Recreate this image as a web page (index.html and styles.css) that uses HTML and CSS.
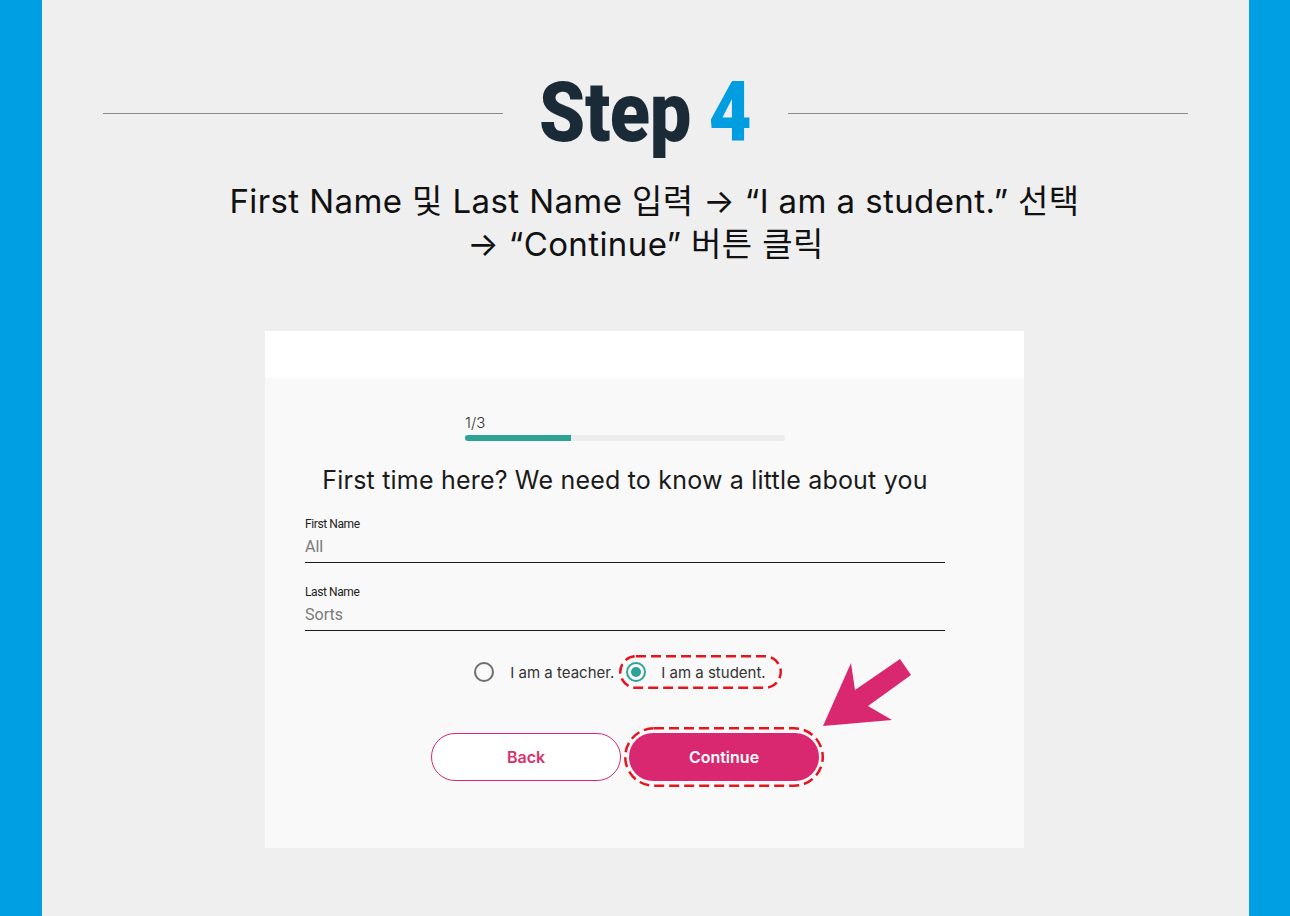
FILE: index.html
```html
<!DOCTYPE html>
<html lang="ko">
<head>
  <meta charset="UTF-8">
  <title>Step 4</title>
  <link rel="stylesheet" href="styles.css">
</head>
<body>
  <main class="page">
    <header class="step-head">
      <span class="rule"></span>
      <h1 class="step-title"><span class="step-text">Step <em>4</em></span></h1>
      <span class="rule"></span>
    </header>

    <p class="guide"><span class="guide-first">First Name 및 Last Name 입력 → “I am a student.” 선택</span><br>→ “Continue” 버튼 클릭</p>

    <section class="card">
      <div class="card-top"></div>
      <div class="card-body">
        <div class="progress">
          <div class="progress-label">1/3</div>
          <div class="progress-track"><div class="progress-fill"></div></div>
        </div>

        <h2 class="card-title">First time here? We need to know a little about you</h2>

        <div class="field">
          <label class="field-label">First Name</label>
          <div class="field-value">All</div>
        </div>
        <div class="field">
          <label class="field-label">Last Name</label>
          <div class="field-value">Sorts</div>
        </div>

        <div class="roles">
          <div class="role">
            <span class="radio"></span>
            <span class="role-text">I am a teacher.</span>
          </div>
          <div class="role role-picked">
            <span class="radio radio-on"></span>
            <span class="role-text">I am a student.</span>
            <svg class="mark mark-role" width="163" height="34" viewBox="0 0 163 34">
              <rect x="1.25" y="1.25" width="160.5" height="31.5" rx="15.75"/>
            </svg>
          </div>
        </div>

        <div class="actions">
          <button class="btn btn-back">Back</button>
          <div class="btn-wrap">
            <button class="btn btn-continue">Continue</button>
            <svg class="mark mark-btn" width="200" height="60" viewBox="0 0 200 60">
              <rect x="1.25" y="1.25" width="197.5" height="57.5" rx="28.75"/>
            </svg>
          </div>
        </div>
      </div>

      <svg class="pointer" width="90" height="70" viewBox="0 0 90 70">
        <polygon points="1,68 29,5 33,32 78,1 89,17 46,48 70,62" fill="#d9286f"/>
      </svg>
    </section>
  </main>
</body>
</html>
```

FILE: styles.css
```css
body {
  margin: 0;
  background: #009fe3;
  font-family: Inter, "Noto Sans", sans-serif;
}

.page {
  margin-left: 42px;
  width: 1207px;
  min-height: 916px;
  background: #efefef;
  padding: 68px 61px 0;
  box-sizing: border-box;
}

.step-head {
  display: flex;
  align-items: center;
}

.rule {
  flex: 1;
  height: 1px;
  background: #8a8a8a;
}

.step-title {
  flex: none;
  width: 285px;
  margin: 0;
  text-align: center;
  font-family: Roboto, sans-serif;
  font-weight: 900;
  font-size: 83px;
  line-height: 90px;
  color: #1a2b37;
}

.step-text {
  display: inline-block;
  transform: scaleX(0.89);
  letter-spacing: -0.5px;
}

.step-text em {
  font-style: normal;
  color: #009de0;
}

.guide {
  margin: 22px 0 0;
  text-align: center;
  font-family: Inter, "Noto Sans CJK KR", sans-serif;
  font-size: 33px;
  line-height: 43px;
  letter-spacing: 0.4px;
  color: #111;
}

.guide-first {
  padding-left: 18px;
}

.card {
  position: relative;
  width: 759px;
  margin: 65px 0 0 162px;
}

.card-top {
  height: 47px;
  background: #fff;
}

.card-body {
  background: #f9f9f9;
  padding: 35px 79px 67px 40px;
  color: #1f1f1f;
}

.progress {
  width: 320px;
  margin: 0 auto;
}

.progress-label {
  font-size: 15px;
  line-height: 20px;
  font-weight: 300;
  color: #333;
}

.progress-track {
  margin-top: 2px;
  height: 6px;
  border-radius: 3px;
  background: #ececec;
  overflow: hidden;
}

.progress-fill {
  width: 33%;
  height: 100%;
  background: #2da396;
}

.card-title {
  margin: 24px 0 0;
  text-align: center;
  font-weight: 400;
  font-size: 25px;
  line-height: 30px;
  letter-spacing: 0.2px;
  color: #1a1a1a;
}

.field {
  margin-top: 22px;
  border-bottom: 1px solid #1a1a1a;
}

.field-label {
  display: block;
  font-family: Roboto, sans-serif;
  font-size: 12px;
  line-height: 14px;
  letter-spacing: -0.4px;
  color: #222;
}

.field-value {
  margin-top: 6px;
  padding-bottom: 5px;
  font-family: Roboto, sans-serif;
  font-size: 16px;
  line-height: 20px;
  color: #7a7a7a;
}

.roles {
  display: flex;
  justify-content: center;
  align-items: center;
  gap: 5px;
  margin-top: 24px;
  padding-left: 5px;
}

.role {
  display: flex;
  align-items: center;
  gap: 16px;
  height: 34px;
  box-sizing: border-box;
}

.role-picked {
  position: relative;
  gap: 15px;
  padding: 0 15px 0 7px;
}

.role-text {
  font-size: 15px;
  color: #333;
}

.radio {
  width: 20px;
  height: 20px;
  box-sizing: border-box;
  border: 2px solid #6e6e6e;
  border-radius: 50%;
  position: relative;
}

.radio-on {
  border-color: #2da396;
}

.radio-on::after {
  content: "";
  position: absolute;
  left: 3px;
  top: 3px;
  width: 10px;
  height: 10px;
  border-radius: 50%;
  background: #2da396;
}

.mark {
  position: absolute;
  fill: none;
  stroke: #e8141c;
  stroke-width: 2.5;
  stroke-dasharray: 10 5;
  pointer-events: none;
}

.mark-role {
  left: 0;
  top: 0;
}

.mark-btn {
  left: -5px;
  top: -6px;
}

.actions {
  display: flex;
  justify-content: center;
  gap: 8px;
  margin-top: 44px;
}

.btn-wrap {
  position: relative;
}

.btn {
  display: block;
  width: 190px;
  height: 48px;
  border-radius: 24px;
  font-family: Inter, sans-serif;
  font-size: 16px;
  font-weight: 600;
  cursor: pointer;
}

.btn-back {
  background: #fff;
  border: 1px solid #d9286f;
  color: #d6336c;
}

.btn-continue {
  background: #d9286f;
  border: none;
  color: #fff;
}

.pointer {
  position: absolute;
  left: 557px;
  top: 327px;
}
```
